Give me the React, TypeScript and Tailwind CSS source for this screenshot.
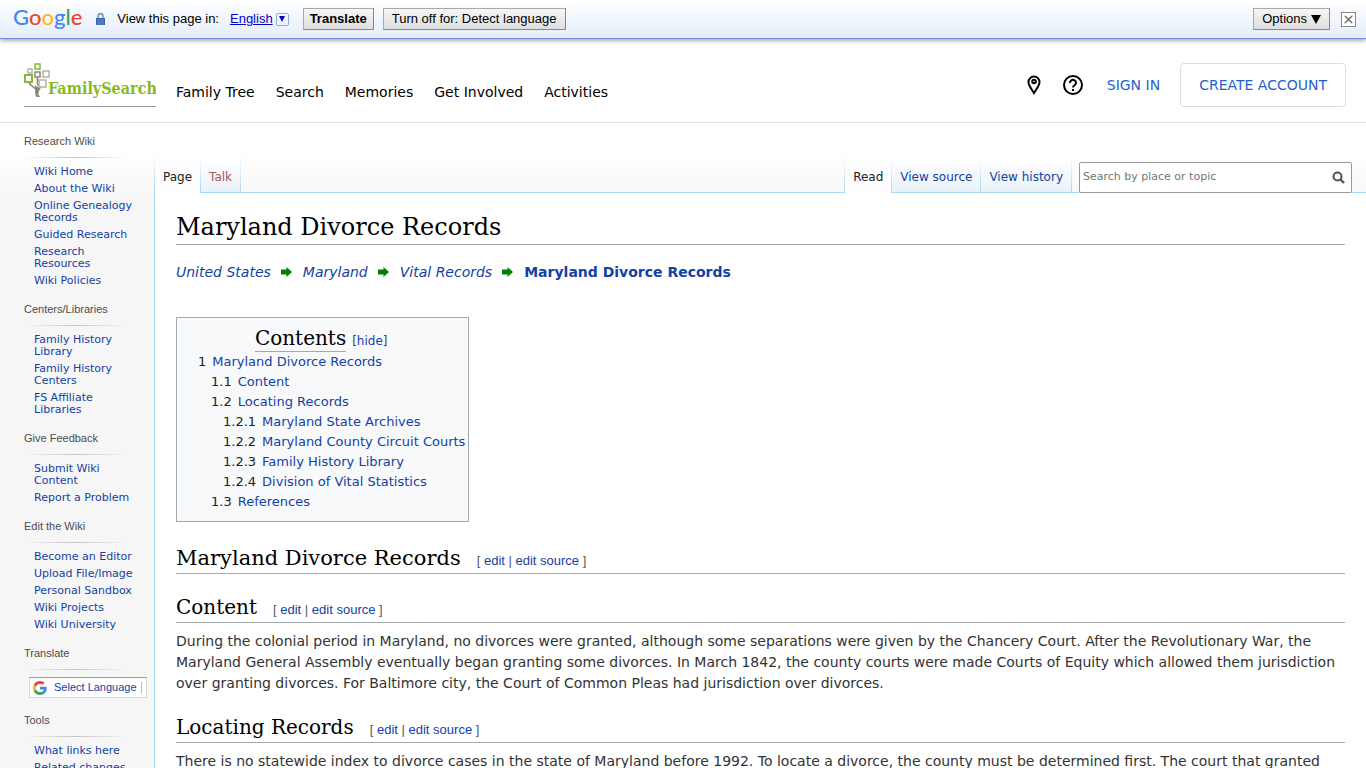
import { X } from "lucide-react";

const NAV_ITEMS = ["Family Tree", "Search", "Memories", "Get Involved", "Activities"];

const PORTALS = [
  {
    title: "Research Wiki",
    links: ["Wiki Home", "About the Wiki", "Online Genealogy Records", "Guided Research", "Research Resources", "Wiki Policies"],
  },
  {
    title: "Centers/Libraries",
    links: ["Family History Library", "Family History Centers", "FS Affiliate Libraries"],
  },
  { title: "Give Feedback", links: ["Submit Wiki Content", "Report a Problem"] },
  {
    title: "Edit the Wiki",
    links: ["Become an Editor", "Upload File/Image", "Personal Sandbox", "Wiki Projects", "Wiki University"],
  },
  { title: "Translate", links: [] },
  { title: "Tools", links: ["What links here", "Related changes"] },
];

const TOC = [
  { num: "1", label: "Maryland Divorce Records", indent: "pl-[13px]" },
  { num: "1.1", label: "Content", indent: "pl-[26px]" },
  { num: "1.2", label: "Locating Records", indent: "pl-[26px]" },
  { num: "1.2.1", label: "Maryland State Archives", indent: "pl-[38px]" },
  { num: "1.2.2", label: "Maryland County Circuit Courts", indent: "pl-[38px]" },
  { num: "1.2.3", label: "Family History Library", indent: "pl-[38px]" },
  { num: "1.2.4", label: "Division of Vital Statistics", indent: "pl-[38px]" },
  { num: "1.3", label: "References", indent: "pl-[26px]" },
];

function GoogleG() {
  return (
    <svg viewBox="0 0 48 48" className="size-[14px] shrink-0" aria-hidden="true">
      <path fill="#ea4335" d="M24 9.500c3.540 0 6.710 1.220 9.210 3.600l6.850-6.850C35.900 2.380 30.470 0 24 0 14.620 0 6.510 5.380 2.560 13.220l7.980 6.190C12.430 13.720 17.740 9.500 24 9.500z" />
      <path fill="#4285f4" d="M46.980 24.550c0-1.570-.15-3.090-.38-4.550H24v9.020h12.940c-.58 2.960-2.260 5.480-4.780 7.180l7.730 6c4.510-4.180 7.090-10.360 7.090-17.650z" />
      <path fill="#fbbc05" d="M10.530 28.590c-.48-1.450-.76-2.990-.76-4.590s.27-3.140.76-4.590l-7.980-6.190C.92 16.460 0 20.120 0 24c0 3.880.92 7.540 2.560 10.780l7.970-6.190z" />
      <path fill="#34a853" d="M24 48c6.480 0 11.930-2.130 15.890-5.810l-7.730-6c-2.150 1.450-4.920 2.300-8.160 2.300-6.260 0-11.570-4.220-13.470-9.910l-7.980 6.190C6.510 42.620 14.620 48 24 48z" />
    </svg>
  );
}

function LockIcon() {
  return (
    <svg width="9" height="12" viewBox="0 0 9 12" className="ml-[14px] shrink-0" aria-hidden="true">
      <path d="M2 6V3a2.500 2.500 0 0 1 5 0v3" fill="none" stroke="#5b7fae" strokeWidth="1.300" />
      <rect y="5" width="9" height="7" fill="#3565a8" />
      <path d="M1 7h7M1 9h7M1 11h7" stroke="#7ca3d6" strokeWidth=".7" />
    </svg>
  );
}

function TranslateBar() {
  const button = "h-[22px] border border-[#a9a9a9] border-r-[#888] border-b-[#888] bg-linear-to-b from-[#f6f6f6] to-[#dedede] text-[13px] leading-[18px] text-black";
  return (
    <div className="relative z-10 flex h-[39px] items-center border-b border-[#6b90da] bg-linear-to-b from-white to-[#e3edfb] pr-[10px] pl-[13px] font-['Liberation_Sans',sans-serif] text-[13px] text-black shadow-[0_1px_5px_rgba(0,0,0,0.45)]">
      <span className="pb-1 font-[Lato,sans-serif] text-[22px] leading-6 font-medium" aria-label="Google">
        <span className="text-[#4285f4]">G</span>
        <span className="text-[#ea4335]">o</span>
        <span className="text-[#fbbc05]">o</span>
        <span className="text-[#4285f4]">g</span>
        <span className="text-[#34a853]">l</span>
        <span className="text-[#ea4335]">e</span>
      </span>
      <LockIcon />
      <span className="ml-3">View this page in:</span>
      <a href="#language" className="ml-[11px] flex items-center text-[#0000cc]">
        <span className="underline">English</span>
        <span className="ml-[3px] flex size-[13px] items-center justify-center rounded-xs border border-[#8fa8d8]">
          <svg width="6" height="6" viewBox="0 0 6 6" aria-hidden="true">
            <path d="M0 0h6L3 6z" fill="#0000cc" />
          </svg>
        </span>
      </a>
      <button className={`${button} ml-[14px] px-1.5 font-bold`}>Translate</button>
      <button className={`${button} ml-[9px] px-2`}>Turn off for: Detect language</button>
      <button className={`${button} ml-auto flex items-center gap-1 px-2`}>
        Options
        <svg width="10" height="9" viewBox="0 0 10 9" aria-hidden="true">
          <path d="M0 0h10L5 9z" />
        </svg>
      </button>
      <button aria-label="Close" className="ml-[11px] flex size-[15px] items-center justify-center border border-[#888] bg-white text-[#777]">
        <X size={13} strokeWidth={3} className="shrink-0" />
      </button>
    </div>
  );
}

function FamilySearchLogo() {
  return (
    <svg width="132" height="36" viewBox="0 0 132 36" role="img" aria-label="FamilySearch">
      <path d="M13.500 14c0 4-1 6 1 9M5 19c1 5 6 4 8 9M18 23c-3 2-4 4-4 7" fill="none" stroke="#8f857b" strokeWidth="1.600" />
      <path d="M10.500 22c2 4-1 7 2 12h3.500c-3-4-2-6-.500-9z" fill="#8f857b" />
      <g fill="#fff" strokeWidth="1.500">
        <rect x="11" y="1" width="5" height="5" stroke="#86b83a" />
        <rect x="4" y="6" width="4" height="4" stroke="#b5b0ab" />
        <rect x="11" y="9" width="5" height="5" stroke="#8f857b" />
        <rect x="19" y="8" width="6" height="6" stroke="#b5b0ab" />
        <rect x="1" y="12" width="7" height="7" stroke="#86b83a" strokeWidth="2" />
        <rect x="15" y="17" width="7" height="7" stroke="#b5b0ab" />
      </g>
      <text x="24" y="31" fill="#87b922" fontFamily="'DejaVu Serif Condensed','DejaVu Serif',serif" fontWeight="700" fontSize="16">
        FamilySearch
      </text>
    </svg>
  );
}

function SiteHeader() {
  return (
    <header className="flex h-[84px] items-center border-b border-[#e0e0e0] bg-white pr-5 pl-6">
      <a href="#home" className="mt-2 border-b border-[#999] pb-[7px]">
        <FamilySearchLogo />
      </a>
      <nav className="ml-5 flex gap-[21px] pt-[23px] pb-px text-sm text-black">
        {NAV_ITEMS.map((item) => (
          <a key={item} href="#nav">
            {item}
          </a>
        ))}
      </nav>
      <div className="ml-auto flex items-center pt-[9px] text-sm text-[#1f5fce]">
        <a href="#places" aria-label="Places">
          <svg width="14" height="20" viewBox="0 0 14 20" fill="none" stroke="#000" strokeWidth="2">
            <path d="M7 18C4.500 14 1.500 10.500 1.500 7a5.500 5.500 0 0 1 11 0c0 3.500-3 7-5.500 11z" />
            <circle cx="7" cy="6.500" r="1.800" />
          </svg>
        </a>
        <a href="#help" aria-label="Help" className="ml-[22px]">
          <svg width="20" height="20" viewBox="0 0 20 20" fill="none" stroke="#000" strokeWidth="2">
            <circle cx="10" cy="10" r="9" />
            <path d="M7 8a3 3 0 1 1 4.800 2.200C10.600 11 10 11.500 10 12.600M10 14v2" />
          </svg>
        </a>
        <a href="#signin" className="ml-6">
          SIGN IN
        </a>
        <a href="#create" className="ml-5 rounded border border-[#ddd] px-[18px] py-[11px]">
          CREATE ACCOUNT
        </a>
      </div>
    </header>
  );
}

function Sidebar() {
  return (
    <aside className="w-[154px] shrink-0 pt-[10px] pl-6">
      {PORTALS.map((portal) => (
        <section key={portal.title} className="mb-[14px]">
          <h3 className="font-['Liberation_Sans',sans-serif] text-[11px] leading-4 text-[#4d4d4d]">{portal.title}</h3>
          <div className="mt-2 mb-[7px] h-px w-[104px] bg-linear-to-r from-transparent via-[#c4c4c4] to-transparent" />
          {portal.title === "Translate" ? (
            <button className="ml-[5px] flex h-[21px] w-[118px] items-center border border-[#d5d5d5] border-t-[#9b9b9b] bg-white pl-[3px] font-['Liberation_Sans',sans-serif] text-[11px] text-[#1441a5]">
              <GoogleG />
              <span className="ml-[7px] whitespace-nowrap">Select Language</span>
              <span className="ml-1 h-3 border-l border-[#bbb]" />
            </button>
          ) : (
            <ul className="flex w-[118px] flex-col gap-[5px] pt-px pl-[10px] text-[11px] leading-3 text-[#1441a5]">
              {portal.links.map((link) => (
                <li key={link}>
                  <a href="#wiki">{link}</a>
                </li>
              ))}
            </ul>
          )}
        </section>
      ))}
    </aside>
  );
}

function TabDivider() {
  return <span className="w-px shrink-0 bg-linear-to-b from-white/0 to-[#a7d7f9]" />;
}

function Tab({ label, active = false, red = false }: { label: string; active?: boolean; red?: boolean }) {
  const color = active ? "text-[#222]" : red ? "text-[#a55858]" : "text-[#1441a5]";
  const background = active ? "bg-linear-to-b from-white/0 to-white" : "bg-linear-to-b from-white to-[#e8f2f8]";
  const edge = active ? "border-white" : "border-[#a7d7f9]";
  return (
    <li className="flex h-[35px]">
      <a href="#tab" className={`flex items-center border-b px-2 pt-[3px] text-xs whitespace-nowrap ${color} ${background} ${edge}`}>
        {label}
      </a>
      <TabDivider />
    </li>
  );
}

function TabBar() {
  return (
    <div className="flex h-[70px] shrink-0 items-end">
      <div className="flex">
        <TabDivider />
        <ul className="flex">
          <Tab label="Page" active />
          <Tab label="Talk" red />
        </ul>
      </div>
      <div className="h-[35px] flex-1 border-b border-[#a7d7f9]" />
      <div className="flex">
        <TabDivider />
        <ul className="flex">
          <Tab label="Read" active />
          <Tab label="View source" />
          <Tab label="View history" />
        </ul>
      </div>
      <form className="h-[35px] w-[294px] shrink-0 border-b border-[#a7d7f9] pt-1 pr-[14px] pl-[7px]">
        <div className="flex h-[31px] items-center rounded-xs border border-[#999] bg-white pr-1.5">
          <input
            type="search"
            aria-label="Search by place or topic"
            placeholder="Search by place or topic"
            className="min-w-0 flex-1 px-[3px] text-[11px] outline-none placeholder:text-[#757575]"
          />
          <button aria-label="Search">
            <svg width="13" height="13" viewBox="0 0 13 13" fill="none" stroke="#555" aria-hidden="true">
              <circle cx="5.500" cy="5.500" r="4" strokeWidth="2" />
              <path d="M8.500 8.500l3.500 3.500" strokeWidth="2.400" />
            </svg>
          </button>
        </div>
      </form>
    </div>
  );
}

function Arrow() {
  return (
    <svg width="11" height="10" viewBox="0 0 11 10" className="mr-[11px] mb-0.5 ml-[10px] shrink-0" aria-hidden="true">
      <path d="M0 2.500h5.500V0L11 5l-5.500 5V7.500H0z" fill="#008000" />
    </svg>
  );
}

function SectionHeading({ title, size }: { title: string; size: string }) {
  return (
    <div className="flex items-baseline border-b border-[#a2a9b1]">
      <h2 className={`font-['DejaVu_Serif',serif] leading-[30px] text-black ${size}`}>{title}</h2>
      <span className="ml-4 font-['Liberation_Sans',sans-serif] text-[13px] text-[#54595d]">
        [{" "}
        <a href="#edit" className="text-[#1441a5]">
          edit
        </a>
        {" | "}
        <a href="#source" className="text-[#1441a5]">
          edit source
        </a>{" "}
        ]
      </span>
    </div>
  );
}

function Contents() {
  return (
    <nav aria-label="Contents" className="mt-[34px] w-fit border border-[#a2a9b1] bg-[#f8f9fa] pt-2 pr-[3px] pb-[9px] pl-2 text-[13px]">
      <div className="flex items-baseline justify-center pr-2">
        <h2 className="border-b border-[#a2a9b1] font-['DejaVu_Serif',serif] text-xl leading-[25px] text-black">Contents</h2>
        <span className="ml-1.5 text-xs text-[#444]">
          [<button className="text-[#1441a5]">hide</button>]
        </span>
      </div>
      <ul>
        {TOC.map((entry) => (
          <li key={entry.num} className={`flex gap-1.5 leading-5 ${entry.indent}`}>
            <span className="text-[#222]">{entry.num}</span>
            <a href="#section" className="text-[#1441a5]">
              {entry.label}
            </a>
          </li>
        ))}
      </ul>
    </nav>
  );
}

function Article() {
  return (
    <main className="flex-1 border-l border-[#a7d7f9] bg-white px-[21px] pt-[18px] text-sm leading-[21px] text-[#333]">
      <h1 className="border-b border-[#a2a9b1] font-['DejaVu_Serif',serif] text-2xl leading-[33px] text-black">Maryland Divorce Records</h1>
      <div className="mt-[17px] flex items-center text-[#1441a5]">
        <a href="#us" className="italic">United States</a>
        <Arrow />
        <a href="#md" className="italic">Maryland</a>
        <Arrow />
        <a href="#vital" className="italic">Vital Records</a>
        <Arrow />
        <strong>Maryland Divorce Records</strong>
      </div>
      <Contents />
      <div className="mt-[21px]">
        <SectionHeading title="Maryland Divorce Records" size="text-[21px]" />
      </div>
      <div className="mt-[18px]">
        <SectionHeading title="Content" size="text-xl" />
      </div>
      <p className="mt-2">
        During the colonial period in Maryland, no divorces were granted, although some separations were given by the Chancery Court. After the Revolutionary War, the
        Maryland General Assembly eventually began granting some divorces. In March 1842, the county courts were made Courts of Equity which allowed them jurisdiction
        over granting divorces. For Baltimore city, the Court of Common Pleas had jurisdiction over divorces.
      </p>
      <div className="mt-[18px]">
        <SectionHeading title="Locating Records" size="text-xl" />
      </div>
      <p className="mt-2">
        There is no statewide index to divorce cases in the state of Maryland before 1992. To locate a divorce, the county must be determined first. The court that granted
      </p>
    </main>
  );
}

export default function App() {
  return (
    <div className="flex h-screen flex-col overflow-hidden bg-[#f6f6f6] font-['DejaVu_Sans',sans-serif]">
      <TranslateBar />
      <SiteHeader />
      <div className="flex min-h-0 flex-1 bg-[linear-gradient(to_bottom,#ffffff_30px,#f6f6f6_80px)]">
        <Sidebar />
        <div className="flex min-w-0 flex-1 flex-col">
          <TabBar />
          <Article />
        </div>
      </div>
    </div>
  );
}
